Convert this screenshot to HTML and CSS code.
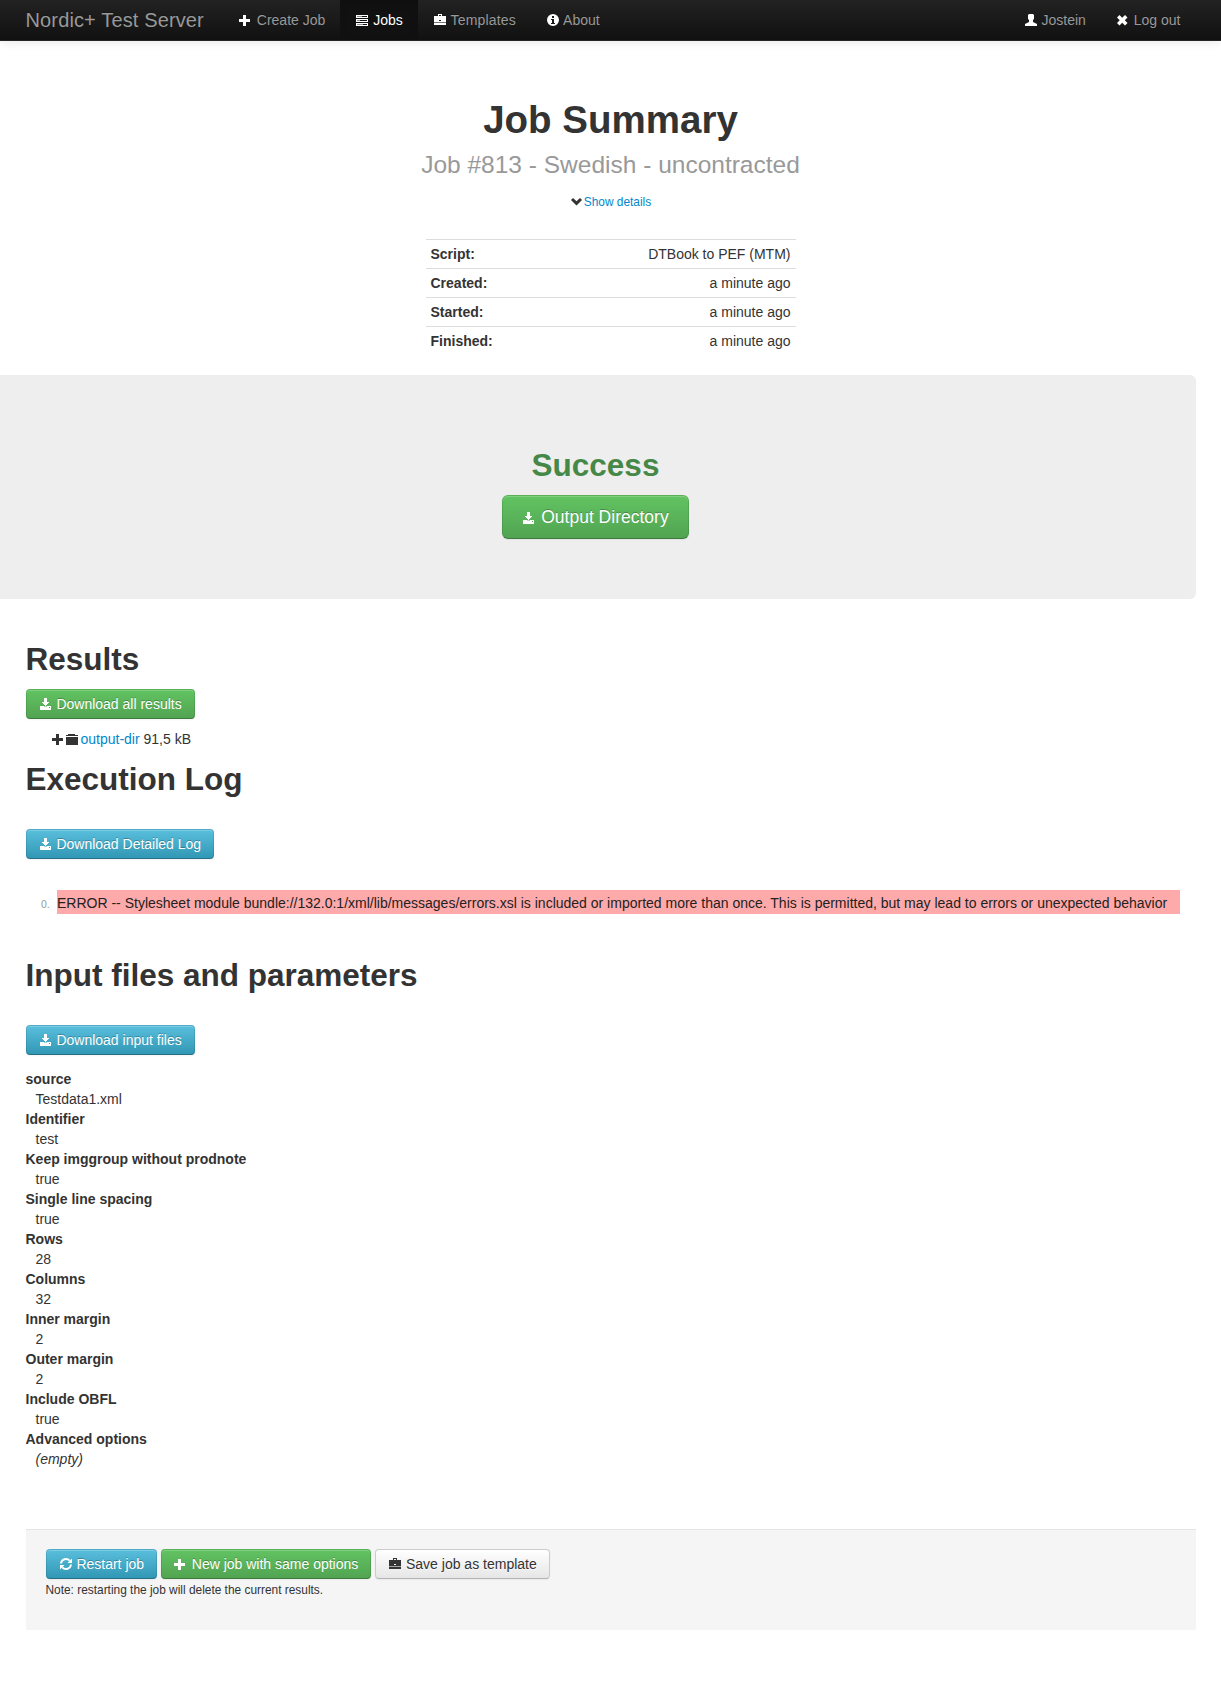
FILE: index.html
```html
<!DOCTYPE html>
<html lang="en">
<head>
<meta charset="utf-8">
<title>Job Summary</title>
<link rel="stylesheet" href="styles.css">
</head>
<body>
<svg class="sprite" width="0" height="0" aria-hidden="true">
  <symbol id="plus" viewBox="0 0 14 14"><path d="M4 2h3v4h4v3H7v4H4V9H0V6h4z"/></symbol>
  <symbol id="tasks" viewBox="0 0 14 14"><path fill-rule="evenodd" d="M1 2h12v3H1zM2 3v1h10V3zM1 6h12v3H1zM2 7v1h10V7zM1 10h12v3H1zM2 11v1h10v-1z"/><path d="M2 3h5v1H2zM2 7h3v1H2zM2 11h6v1H2z" opacity=".5"/></symbol>
  <symbol id="briefcase" viewBox="0 0 14 14"><path fill-rule="evenodd" d="M5 1h4v2h4v6H1V3h4zM6 2v1h2V2zM6 7v1h2V7zM1 10h12v2H1z"/><path d="M1 9h12v1H1z" opacity=".4"/></symbol>
  <symbol id="info" viewBox="0 0 14 14"><path fill-rule="evenodd" d="M7 1a6 6 0 1 1 0 12A6 6 0 0 1 7 1zM6 3v2h2V3zM5 6v1h1v3H5v1h4v-1H8V6z"/></symbol>
  <symbol id="user" viewBox="0 0 14 14"><path d="M5 1h4l1 1v4L9 7v2l4 2v2H1v-2l4-2V7L4 6V2z"/></symbol>
  <symbol id="remove" viewBox="0 0 14 14"><path d="M3.500 2l2.700 2.700L9 2l2.500 2.500L8.800 7.300l2.700 2.700L9 12.500 6.200 9.800 3.500 12.500 1 10l2.700-2.700L1 4.500z"/></symbol>
  <symbol id="chevron" viewBox="0 0 14 14"><path d="M3 4l3.500 3.300L10 4l2 2-5.500 5.500L1 6z"/></symbol>
  <symbol id="download" viewBox="0 0 14 14"><path fill-rule="evenodd" d="M5 1h3v4h2v1H9v1H8v1H7v1H6V8H5V7H4V6H3V5h2zM1 9h4v1h3V9h4v4H1zM10 10v1h1v-1z"/><path d="M5 9h3v1H5z" opacity=".5"/></symbol>
  <symbol id="folder" viewBox="0 0 14 14"><path d="M2 2h7v1h3v1H0V3h2zM0 5h12v8H0z"/></symbol>
  <symbol id="refresh" viewBox="0 0 14 14">
    <path d="M2 6.500A5 5 0 0 1 10.700 3.700M12 7.500A5 5 0 0 1 3.300 10.300" fill="none" stroke="currentColor" stroke-width="1.900"/>
    <path d="M13 1.500V6H8.500zM1 12.500V8h4.500z"/>
  </symbol>
</svg>

<header class="navbar">
  <nav class="navbar-inner">
    <a class="brand">Nordic+ Test Server</a>
    <a class="nav-link"><svg class="icon"><use href="#plus"/></svg> Create Job</a>
    <a class="nav-link active"><svg class="icon"><use href="#tasks"/></svg> Jobs</a>
    <a class="nav-link wide"><svg class="icon"><use href="#briefcase"/></svg> Templates</a>
    <a class="nav-link"><svg class="icon smooth"><use href="#info"/></svg> About</a>
    <a class="nav-link push"><svg class="icon smooth"><use href="#user"/></svg> Jostein</a>
    <a class="nav-link"><svg class="icon smooth"><use href="#remove"/></svg> Log out</a>
  </nav>
</header>

<section class="summary">
  <h1>Job Summary<br><small>Job #813 - Swedish - uncontracted</small></h1>
  <p class="toggle"><svg class="icon smooth"><use href="#chevron"/></svg><a class="link small">Show details</a></p>
  <table class="facts">
    <tr><th>Script:</th><td>DTBook to PEF (MTM)</td></tr>
    <tr><th>Created:</th><td>a minute ago</td></tr>
    <tr><th>Started:</th><td>a minute ago</td></tr>
    <tr><th>Finished:</th><td>a minute ago</td></tr>
  </table>
</section>

<section class="hero">
  <h2>Success</h2>
  <a class="btn btn-large btn-success"><svg class="icon"><use href="#download"/></svg> Output Directory</a>
</section>

<main class="content">
  <h2>Results</h2>
  <a class="btn btn-success"><svg class="icon"><use href="#download"/></svg> Download all results</a>
  <div class="files"><svg class="icon"><use href="#plus"/></svg><svg class="icon"><use href="#folder"/></svg><a class="link">output-dir</a> 91,5 kB</div>

  <h2 class="spaced">Execution Log</h2>
  <a class="btn btn-info"><svg class="icon"><use href="#download"/></svg> Download Detailed Log</a>
  <div class="log"><span class="log-number">0.</span><span class="log-text">ERROR -- Stylesheet module bundle://132.0:1/xml/lib/messages/errors.xsl is included or imported more than once. This is permitted, but may lead to errors or unexpected behavior</span></div>

  <h2 class="spaced">Input files and parameters</h2>
  <a class="btn btn-info"><svg class="icon"><use href="#download"/></svg> Download input files</a>
  <dl class="params">
    <dt>source</dt><dd>Testdata1.xml</dd>
    <dt>Identifier</dt><dd>test</dd>
    <dt>Keep imggroup without prodnote</dt><dd>true</dd>
    <dt>Single line spacing</dt><dd>true</dd>
    <dt>Rows</dt><dd>28</dd>
    <dt>Columns</dt><dd>32</dd>
    <dt>Inner margin</dt><dd>2</dd>
    <dt>Outer margin</dt><dd>2</dd>
    <dt>Include OBFL</dt><dd>true</dd>
    <dt>Advanced options</dt><dd><em>(empty)</em></dd>
  </dl>

  <footer class="form-actions">
    <div class="buttons">
      <a class="btn btn-info"><svg class="icon smooth"><use href="#refresh"/></svg> Restart job</a>
      <a class="btn btn-success"><svg class="icon"><use href="#plus"/></svg> New job with same options</a>
      <a class="btn"><svg class="icon"><use href="#briefcase"/></svg> Save job as template</a>
    </div>
    <div class="note">Note: restarting the job will delete the current results.</div>
  </footer>
</main>
</body>
</html>
```
FILE: styles.css
```css
body {
  margin: 0;
  background: #fff;
  color: #333;
  font: 14px/20px "Liberation Sans", Arial, sans-serif;
}
h1, h2, p, dl, dd { margin: 0; }
.sprite { display: block; }
.icon {
  display: inline-block;
  width: 14px;
  height: 14px;
  margin-top: 1px;
  vertical-align: text-top;
  fill: currentColor;
  shape-rendering: crispEdges;
}
.smooth { shape-rendering: auto; }
.link { color: #08c; }
.small { font-size: 11.9px; line-height: 1; }

.navbar {
  height: 40px;
  padding: 0 25.5px;
  background: linear-gradient(#222, #111);
  border-bottom: 1px solid #252525;
  box-shadow: 0 1px 10px rgba(0, 0, 0, .1);
}
.navbar-inner { display: flex; }
.brand {
  padding: 10px 20px 10px 0;
  color: #999;
  font-size: 20px;
  letter-spacing: .135px;
  text-shadow: 0 -1px 0 rgba(0, 0, 0, .25);
}
.nav-link {
  padding: 10px 15px;
  color: #999;
  text-shadow: 0 -1px 0 rgba(0, 0, 0, .25);
}
.nav-link .icon { color: #fff; }
.nav-link.active {
  color: #fff;
  background: #111;
  box-shadow: inset 0 3px 8px rgba(0, 0, 0, .125);
}
.wide { letter-spacing: .18px; }
.push { margin-left: auto; }

.summary { padding-top: 59px; text-align: center; }
h1 { font-size: 38.5px; line-height: 40px; }
h1 small { color: #999; font-size: 24.5px; font-weight: normal; line-height: 1; }
.toggle { height: 20px; margin: 11px 0 28px; }
.facts {
  width: 370px;
  margin: 0 0 20px 425.5px;
  border-spacing: 0;
}
.facts th, .facts td { padding: 4px 5px; border-top: 1px solid #ddd; }
.facts th { text-align: left; }
.facts td { text-align: right; }

.hero {
  margin: 0 25px 0 -5px;
  padding: 70px 0 60px;
  background: #eee;
  border-radius: 6px;
  text-align: center;
}
h2 { margin-bottom: 10px; font-size: 31.5px; line-height: 40px; }
.hero h2 { color: #468847; }

.btn {
  display: inline-block;
  box-sizing: border-box;
  padding: 4px 12px;
  border: 1px solid #ccc;
  border-color: #ccc #ccc #b3b3b3;
  border-radius: 4px;
  background: linear-gradient(#fff, #e6e6e6);
  color: #333;
  text-shadow: 0 1px 1px rgba(255, 255, 255, .75);
  box-shadow: inset 0 1px 0 rgba(255, 255, 255, .2), 0 1px 2px rgba(0, 0, 0, .05);
  vertical-align: top;
}
.btn-success, .btn-info {
  border-color: rgba(0, 0, 0, .1) rgba(0, 0, 0, .1) rgba(0, 0, 0, .25);
  background-origin: border-box;
  color: #fff;
  text-shadow: 0 -1px 0 rgba(0, 0, 0, .25);
}
.btn-success { background-image: linear-gradient(#62c462, #51a351); }
.btn-info { background-image: linear-gradient(#5bc0de, #2f96b4); }
.btn-large {
  padding: 11px 19px;
  border-radius: 6px;
  font-size: 17.5px;
}
.btn-large .icon { margin-top: 4px; }

.content { padding: 40px 25px 60px 25.5px; }
.content > .btn { display: block; width: fit-content; }
.files { margin: 10px 0; padding-left: 26px; }
.files .link { margin-left: 1px; }
.content h2.spaced { margin-bottom: 30px; }
.log { display: flex; align-items: center; margin: 31px 16px 41px 15.5px; }
.log-number { width: 16px; padding-top: 3px; color: #999; font-size: 10.5px; }
.log-text {
  flex: 1;
  padding: 3px 0 1px;
  background: #faa;
  color: #222;
  white-space: nowrap;
}
.params { margin: 14px 0 60px; }
.params dt { font-weight: bold; }
.params dd { margin-left: 10px; }

.form-actions {
  padding: 19px 20px 35px;
  background: #f5f5f5;
  border-top: 1px solid #e5e5e5;
}
.buttons { display: flex; gap: 3.800px; }
.note { height: 15px; padding-top: 1px; font-size: 11.9px; }
```
